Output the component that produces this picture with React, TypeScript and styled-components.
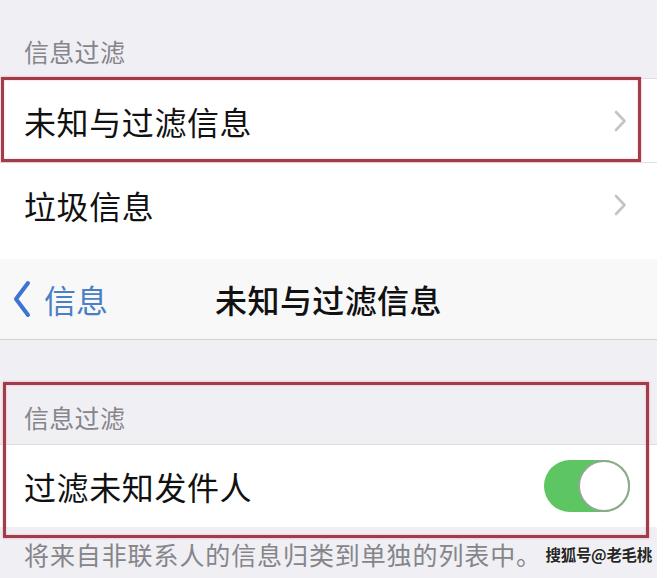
import React from "react";
import styled, { createGlobalStyle } from "styled-components";

const GlobalStyle = createGlobalStyle`
    html, body {
        margin: 0;
        padding: 0;
        background: #ffffff;
    }
    body {
        font-family: "Noto Sans CJK SC", "Noto Sans", sans-serif;
        -webkit-font-smoothing: antialiased;
    }
`;

const Page = styled.div`
    position: relative;
    width: 657px;
    height: 578px;
    overflow: hidden;
    background: #efeff4;
`;

const SectionHeader = styled.div<{ height: number }>`
    height: ${(p) => p.height}px;
    box-sizing: border-box;
    display: flex;
    align-items: flex-end;
    padding: 0 0 14px 24px;
    font-size: 25px;
    line-height: 26px;
    color: #85858a;
    letter-spacing: 0.3px;
`;

const Group = styled.div`
    background: #ffffff;
    border-top: 1px solid #dedee2;
`;

const Row = styled.div<{ height: number; divider?: boolean }>`
    height: ${(p) => p.height}px;
    box-sizing: border-box;
    display: flex;
    align-items: center;
    justify-content: space-between;
    padding: 0 30px 0 24px;
    background: #ffffff;
    border-bottom: ${(p) => (p.divider ? "1px solid #e2e2e6" : "none")};
    font-size: 32px;
    color: #111111;
    letter-spacing: 0.6px;
`;

const Spacer = styled.div<{ height: number; color: string }>`
    height: ${(p) => p.height}px;
    background: ${(p) => p.color};
`;

const NavBar = styled.div`
    height: 81px;
    box-sizing: border-box;
    display: grid;
    grid-template-columns: 1fr auto 1fr;
    align-items: center;
    background: #f8f8f9;
    border-bottom: 1px solid #d3d3d6;
`;

const BackButton = styled.div`
    display: flex;
    align-items: center;
    gap: 12px;
    padding-left: 12px;
    font-size: 32px;
    color: #4b7fc4;
`;

const NavTitle = styled.div`
    font-size: 32px;
    font-weight: 500;
    color: #111111;
    letter-spacing: 0.4px;
`;

const Footer = styled.div`
    height: 53px;
    display: flex;
    align-items: center;
    justify-content: space-between;
    padding: 0 5px 4px 24px;
    font-size: 25px;
    color: #85858a;
    letter-spacing: 0.9px;
`;

const Watermark = styled.span`
    font-size: 15.5px;
    font-weight: 700;
    color: #262626;
    letter-spacing: -0.3px;
    text-shadow: 0 0 2px #ffffff, 0 0 1px #ffffff;
`;

const Toggle = styled.div<{ on: boolean }>`
    position: relative;
    width: 86px;
    height: 52px;
    border-radius: 26px;
    background: ${(p) => (p.on ? "#5dc562" : "#e5e5ea")};
    margin-right: -3px;

    &::after {
        content: "";
        position: absolute;
        top: 0px;
        left: ${(p) => (p.on ? "34px" : "0px")};
        width: 48px;
        height: 48px;
        border-radius: 50%;
        background: #ffffff;
        border: 2px solid #8fa98f;
    }
`;

const Highlight = styled.div<{ top: number; left: number; w: number; h: number }>`
    position: absolute;
    top: ${(p) => p.top}px;
    left: ${(p) => p.left}px;
    width: ${(p) => p.w}px;
    height: ${(p) => p.h}px;
    box-sizing: border-box;
    border: 3px solid #a13c4b;
    box-shadow: 0 0 2px rgba(235, 120, 140, 0.7),
        inset 0 0 2px rgba(235, 120, 140, 0.6);
    pointer-events: none;
`;

const Chevron = () => (
    <svg width="14" height="22" viewBox="0 0 14 22">
        <path
            d="M3 2 L11.5 11 L3 20"
            fill="none"
            stroke="#c4c4c8"
            strokeWidth="2.6"
            strokeLinecap="round"
            strokeLinejoin="round"
        />
    </svg>
);

const BackChevron = () => (
    <svg width="20" height="38" viewBox="0 0 20 38">
        <path
            d="M16 3 L4 19 L16 35"
            fill="none"
            stroke="#3b74d2"
            strokeWidth="4"
            strokeLinecap="round"
            strokeLinejoin="round"
        />
    </svg>
);

export default function App() {
    return (
        <>
            <GlobalStyle />
            <Page>
                <SectionHeader height={78}>信息过滤</SectionHeader>
                <Group>
                    <Row height={84} divider>
                        <span>未知与过滤信息</span>
                        <Chevron />
                    </Row>
                    <Row height={84}>
                        <span>垃圾信息</span>
                        <Chevron />
                    </Row>
                </Group>
                <Spacer height={12} color="#ffffff" />
                <NavBar>
                    <BackButton>
                        <BackChevron />
                        <span>信息</span>
                    </BackButton>
                    <NavTitle>未知与过滤信息</NavTitle>
                    <div />
                </NavBar>
                <SectionHeader height={104}>信息过滤</SectionHeader>
                <Group>
                    <Row height={82}>
                        <span>过滤未知发件人</span>
                        <Toggle on />
                    </Row>
                </Group>
                <Footer>
                    <span>将来自非联系人的信息归类到单独的列表中。</span>
                    <Watermark>搜狐号@老毛桃</Watermark>
                </Footer>
                <Highlight top={77} left={1} w={640} h={85} />
                <Highlight top={382} left={3} w={646} h={156} />
            </Page>
        </>
    );
}
